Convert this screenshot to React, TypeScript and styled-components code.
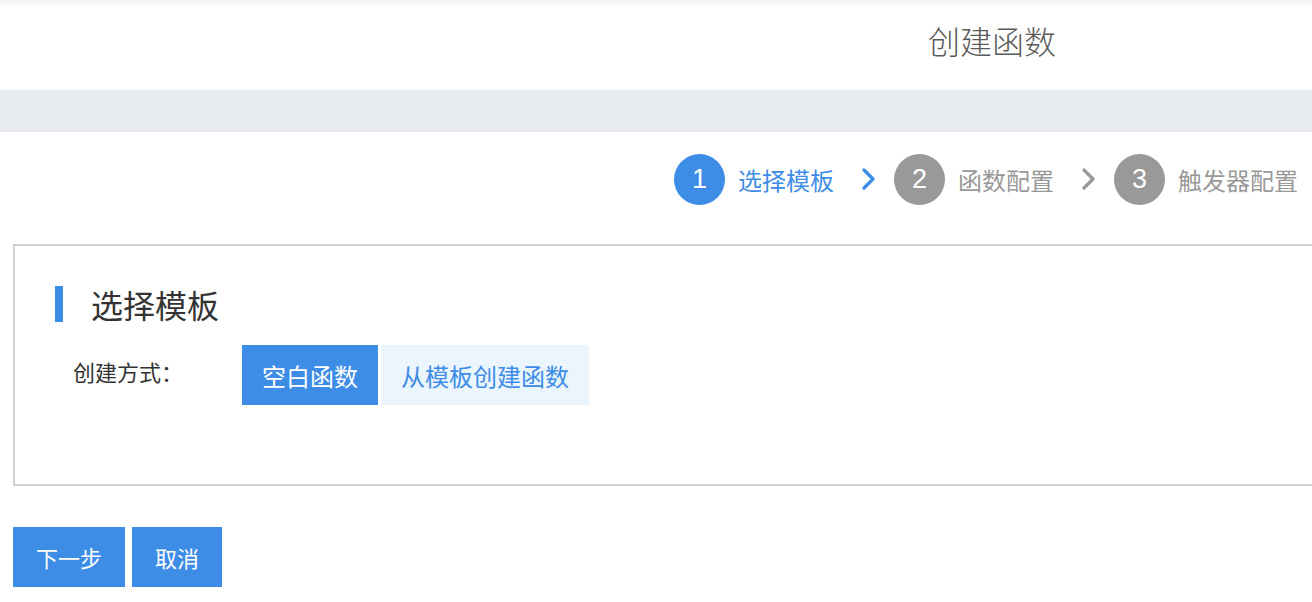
import React from 'react';
import styled, { createGlobalStyle } from 'styled-components';

const GlobalStyle = createGlobalStyle`
  html, body {
    margin: 0;
    padding: 0;
    overflow: hidden;
    background: #fff;
    font-family: "Noto Sans CJK SC", "Noto Sans", sans-serif;
  }
  * {
    box-sizing: border-box;
  }
`;

const Page = styled.div`
  width: 1312px;
  height: 602px;
  overflow: hidden;
`;

const Header = styled.header`
  height: 90px;
  display: flex;
  align-items: center;
  padding: 0 0 10px 928px;
  background: linear-gradient(to bottom, #f1f1f1 0px, #fbfbfb 4px, #fff 9px);
`;

const Title = styled.h1`
  margin: 0;
  font-size: 32px;
  font-weight: 300;
  line-height: 40px;
  color: #5a5a5a;
`;

const Band = styled.div`
  height: 42px;
  background: #e8ebef;
`;

const Steps = styled.div`
  display: flex;
  justify-content: flex-end;
  align-items: flex-start;
  padding: 22px 14px 0 0;
  height: 112px;
`;

const Step = styled.div`
  display: flex;
  align-items: center;
  height: 50px;
`;

const Circle = styled.div<{ $active?: boolean }>`
  width: 51px;
  height: 51px;
  border-radius: 50%;
  background: ${p => (p.$active ? '#3d8ce6' : '#999')};
  color: #fff;
  display: flex;
  align-items: center;
  justify-content: center;
  font-family: "Liberation Sans", "Noto Sans", sans-serif;
  font-size: 27px;
`;

const StepLabel = styled.span<{ $active?: boolean }>`
  margin-left: 13px;
  font-size: 24px;
  color: ${p => (p.$active ? '#3d8ce6' : '#999')};
`;

const Chevron = styled.svg`
  margin: 0 18px 0 28px;
  display: block;
`;

const Body = styled.div`
  padding-left: 13px;
  margin-right: -40px;
`;

const Panel = styled.section`
  border: 2px solid #cfcfcf;
  height: 242px;
  padding: 40px 0 0 40px;
`;

const Heading = styled.h2`
  margin: 0;
  display: flex;
  align-items: center;
  height: 36px;
  font-size: 32px;
  font-weight: 400;
  color: #333;

  &::before {
    content: '';
    width: 8px;
    height: 36px;
    background: #3d8ce6;
    margin-right: 28px;
  }
`;

const Row = styled.div`
  display: flex;
  align-items: flex-start;
  margin-top: 23px;
  padding-left: 18px;
`;

const RowLabel = styled.span`
  width: 169px;
  line-height: 52px;
  font-size: 22px;
  color: #333;
`;

const Options = styled.div`
  display: flex;
  gap: 3px;
`;

const Option = styled.button<{ $selected?: boolean }>`
  height: 60px;
  padding: 0 20px;
  border: none;
  border-radius: 0;
  font-family: inherit;
  font-size: 24px;
  background: ${p => (p.$selected ? '#3d8ce6' : '#eaf5fd')};
  color: ${p => (p.$selected ? '#fff' : '#3d8ce6')};
  cursor: pointer;
`;

const Footer = styled.div`
  display: flex;
  gap: 7px;
  padding: 41px 0 0 13px;
`;

const ActionButton = styled.button`
  height: 60px;
  padding: 0 23px;
  border: none;
  border-radius: 0;
  background: #3d8ce6;
  color: #fff;
  font-family: inherit;
  font-size: 22px;
  cursor: pointer;
`;

const Arrow: React.FC<{ color: string }> = ({ color }) => (
  <Chevron width="14" height="22" viewBox="0 0 14 22">
    <polyline points="2,2 11,11 2,20" fill="none" stroke={color} strokeWidth="3.2" strokeLinecap="round" strokeLinejoin="round" />
  </Chevron>
);

const App: React.FC = () => {
  const [mode, setMode] = React.useState('blank');

  return (
    <Page>
      <GlobalStyle />
      <Header>
        <Title>创建函数</Title>
      </Header>
      <Band />
      <Steps>
        <Step>
          <Circle $active>1</Circle>
          <StepLabel $active>选择模板</StepLabel>
        </Step>
        <Step>
          <Arrow color="#3d8ce6" />
          <Circle>2</Circle>
          <StepLabel>函数配置</StepLabel>
        </Step>
        <Step>
          <Arrow color="#999" />
          <Circle>3</Circle>
          <StepLabel>触发器配置</StepLabel>
        </Step>
      </Steps>
      <Body>
        <Panel>
          <Heading>选择模板</Heading>
          <Row>
            <RowLabel>创建方式：</RowLabel>
            <Options>
              <Option $selected={mode === 'blank'} onClick={() => setMode('blank')}>
                空白函数
              </Option>
              <Option $selected={mode === 'template'} onClick={() => setMode('template')}>
                从模板创建函数
              </Option>
            </Options>
          </Row>
        </Panel>
      </Body>
      <Footer>
        <ActionButton>下一步</ActionButton>
        <ActionButton>取消</ActionButton>
      </Footer>
    </Page>
  );
};

export default App;
